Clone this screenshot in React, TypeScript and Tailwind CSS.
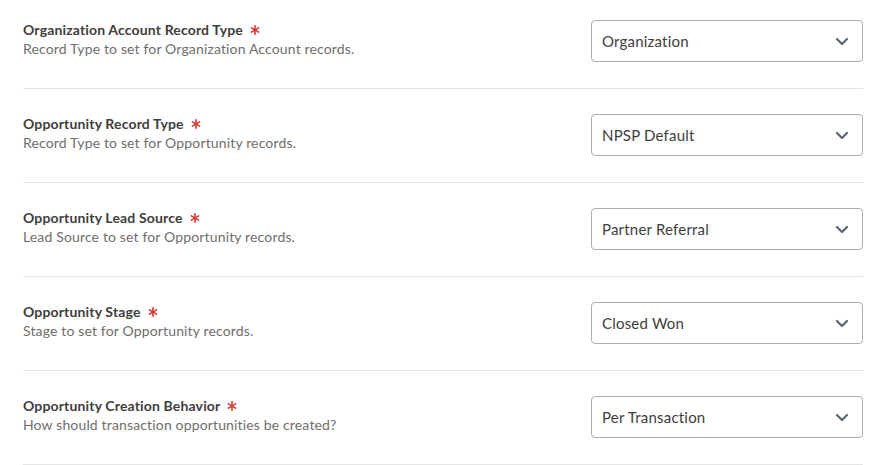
import React from "react";

const rows = [
  {
    label: "Organization Account Record Type",
    help: "Record Type to set for Organization Account records.",
    value: "Organization",
  },
  {
    label: "Opportunity Record Type",
    help: "Record Type to set for Opportunity records.",
    value: "NPSP Default",
  },
  {
    label: "Opportunity Lead Source",
    help: "Lead Source to set for Opportunity records.",
    value: "Partner Referral",
  },
  {
    label: "Opportunity Stage",
    help: "Stage to set for Opportunity records.",
    value: "Closed Won",
  },
  {
    label: "Opportunity Creation Behavior",
    help: "How should transaction opportunities be created?",
    value: "Per Transaction",
  },
];

function Chevron() {
  return (
    <svg width="14" height="9" viewBox="0 0 14 9" fill="none">
      <path d="M2 2L7 7L12 2" stroke="#5c6773" strokeWidth="2.2" strokeLinecap="round" strokeLinejoin="round" />
    </svg>
  );
}

function Asterisk() {
  return (
    <svg width="10" height="10" viewBox="0 0 10 10" className="ml-[7px]">
      <g stroke="#d9362b" strokeWidth="1.6" strokeLinecap="round">
        <path d="M5 0.8V9.2" />
        <path d="M1.4 2.9L8.6 7.1" />
        <path d="M1.4 7.1L8.6 2.9" />
      </g>
    </svg>
  );
}

export default function App() {
  return (
    <div className="min-h-screen bg-white font-['Lato','Liberation_Sans',sans-serif]">
      <div className="pl-[23px] pr-[21px]">
        {rows.map((r, i) => (
          <div
            key={r.label}
            className={`flex items-center justify-between border-b border-[#e5e5e5] pb-[26px] ${i === 0 ? "pt-[20px]" : "pt-[25px]"}`}
          >
            <div className="-mt-[4px] text-[14px] tracking-[0.15px]">
              <div className="flex items-center font-bold text-[#3e3e3c] leading-[19px]">
                {r.label}
                <Asterisk />
              </div>
              <div className="text-[#706e6b] leading-[19px]">{r.help}</div>
            </div>
            <div className="flex h-[42px] w-[272px] items-center justify-between rounded-[4px] border border-[#b0adab] pl-[10px] pr-[13px] text-[15px] tracking-[0.2px] text-[#3e3e3c]">
              <span>{r.value}</span>
              <Chevron />
            </div>
          </div>
        ))}
      </div>
    </div>
  );
}
